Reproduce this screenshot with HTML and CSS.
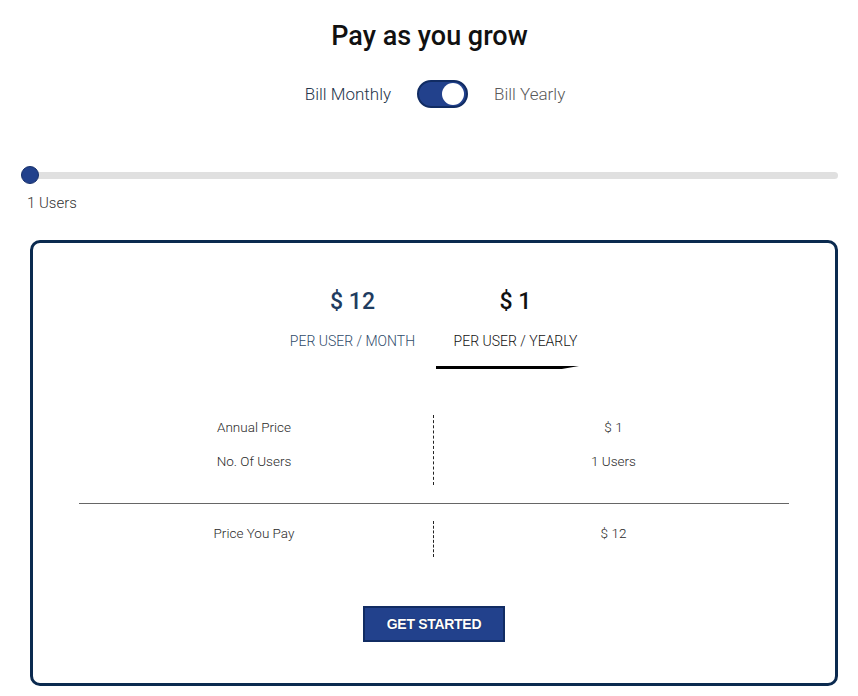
FILE: index.html
```html
<!DOCTYPE html>
<html lang="en">
<head>
    <meta charset="UTF-8">
    <meta name="viewport" content="width=device-width, initial-scale=1.0">
    <title>Pay as you grow</title>
    <link rel="stylesheet" href="styles.css">
</head>
<body>
    <div class="page">
        <h1 class="title">Pay as you grow</h1>

        <div class="billing">
            <span class="billing-opt billing-monthly">Bill Monthly</span>
            <label class="switch">
                <input type="checkbox" checked>
                <span class="switch-knob"></span>
            </label>
            <span class="billing-opt billing-yearly">Bill Yearly</span>
        </div>

        <div class="users">
            <input class="users-range" type="range" min="1" max="100" value="1">
            <div class="users-count">1 Users</div>
        </div>

        <section class="card">
            <div class="tabs">
                <div class="tab tab-monthly">
                    <div class="tab-price">$ 12</div>
                    <div class="tab-label">PER USER / MONTH</div>
                </div>
                <div class="tab tab-yearly active">
                    <div class="tab-price">$ 1</div>
                    <div class="tab-label">PER USER / YEARLY</div>
                </div>
            </div>

            <div class="summary">
                <div class="summary-group">
                    <div class="summary-keys">
                        <div class="summary-row">Annual Price</div>
                        <div class="summary-row">No. Of Users</div>
                    </div>
                    <div class="summary-vals">
                        <div class="summary-row">$ 1</div>
                        <div class="summary-row">1 Users</div>
                    </div>
                </div>
                <hr class="summary-line">
                <div class="summary-group">
                    <div class="summary-keys">
                        <div class="summary-row">Price You Pay</div>
                    </div>
                    <div class="summary-vals">
                        <div class="summary-row">$ 12</div>
                    </div>
                </div>
            </div>

            <div class="actions">
                <button class="btn-start">GET STARTED</button>
            </div>
        </section>
    </div>
</body>
</html>
```

FILE: styles.css
```css
* {
    box-sizing: border-box;
}
body {
    margin: 0;
    background: #fff;
    font-family: Roboto, "Liberation Sans", sans-serif;
    color: #222;
}
.page {
    padding: 0 20px 0 21px;
}
.title {
    margin: 0;
    padding-top: 17px;
    text-align: center;
    font-size: 27px;
    line-height: 38px;
    font-weight: 500;
    color: #111;
}
.billing {
    display: flex;
    justify-content: center;
    align-items: center;
    gap: 26px;
    margin-top: 25px;
    margin-left: 11px;
}
.billing-opt {
    font-size: 17px;
    font-weight: 300;
}
.billing-monthly {
    color: #26364c;
}
.billing-yearly {
    color: #5a5a5a;
}
.switch {
    position: relative;
    display: inline-block;
    width: 51px;
    height: 28px;
}
.switch input {
    display: none;
}
.switch-knob {
    display: block;
    width: 100%;
    height: 100%;
    border-radius: 14px;
    background: #22418c;
    border: 2px solid #112c63;
}
.switch-knob::before {
    content: "";
    position: absolute;
    top: 3px;
    right: 4px;
    width: 22px;
    height: 22px;
    border-radius: 50%;
    background: #fff;
}
.users {
    margin-top: 58px;
}
.users-range {
    -webkit-appearance: none;
    appearance: none;
    display: block;
    width: 100%;
    height: 18px;
    margin: 0;
    background: transparent;
}
.users-range::-webkit-slider-runnable-track {
    height: 7px;
    border-radius: 4px;
    background: #e0e0e0;
}
.users-range::-webkit-slider-thumb {
    -webkit-appearance: none;
    width: 18px;
    height: 18px;
    margin-top: -5.5px;
    border-radius: 50%;
    background: #22418c;
    border: 1px solid #17306b;
}
.users-count {
    margin-top: 10px;
    margin-left: 6px;
    font-size: 15px;
    font-weight: 300;
    color: #333;
}
.card {
    margin: 28px 0 0 9px;
    border: 3px solid #0b2a4f;
    border-radius: 10px;
    padding: 41px 46px 41px;
}
.tabs {
    display: flex;
    justify-content: center;
    gap: 20px;
}
.tab {
    position: relative;
    width: 143px;
    text-align: center;
    padding-bottom: 20px;
}
.tab-price {
    font-size: 23px;
    font-weight: 500;
    line-height: 36px;
}
.tab-label {
    margin-top: 13px;
    font-size: 14px;
    font-weight: 300;
}
.tab-monthly {
    color: #1f3c60;
}
.tab-monthly .tab-label {
    color: #2f4b6a;
}
.tab-yearly {
    color: #111;
}
.tab.active::after {
    content: "";
    position: absolute;
    left: -8px;
    bottom: 0;
    width: 143px;
    height: 3px;
    background: #000;
    clip-path: polygon(0 0, 100% 0, 88% 100%, 0 100%);
}
.summary {
    margin-top: 46px;
    font-size: 13.5px;
    font-weight: 300;
    color: #2a2a2a;
}
.summary-group {
    display: grid;
    grid-template-columns: 1fr 1fr;
}
.summary-keys {
    border-right: 1px dashed #222;
    padding-bottom: 12px;
}
.summary-vals {
    padding-bottom: 12px;
}
.summary-row {
    height: 24px;
    line-height: 24px;
    text-align: center;
    margin-bottom: 10px;
}
.summary-row:last-child {
    margin-bottom: 0;
}
.summary-keys .summary-row {
    margin-right: 4px;
}
.summary-vals .summary-row {
    margin-left: 4px;
}
.summary-line {
    margin: 18px 0 17px;
    border: 0;
    border-top: 1px solid #666;
}
.actions {
    display: flex;
    justify-content: center;
    margin-top: 49px;
}
.btn-start {
    width: 142px;
    height: 36px;
    background: #22418c;
    border: 2px solid #112c63;
    color: #fff;
    font-family: "Liberation Sans", Arial, sans-serif;
    font-weight: bold;
    font-size: 14px;
    text-shadow: 0 0 1px #0a1a3a;
    letter-spacing: -0.3px;
    cursor: pointer;
}
```
